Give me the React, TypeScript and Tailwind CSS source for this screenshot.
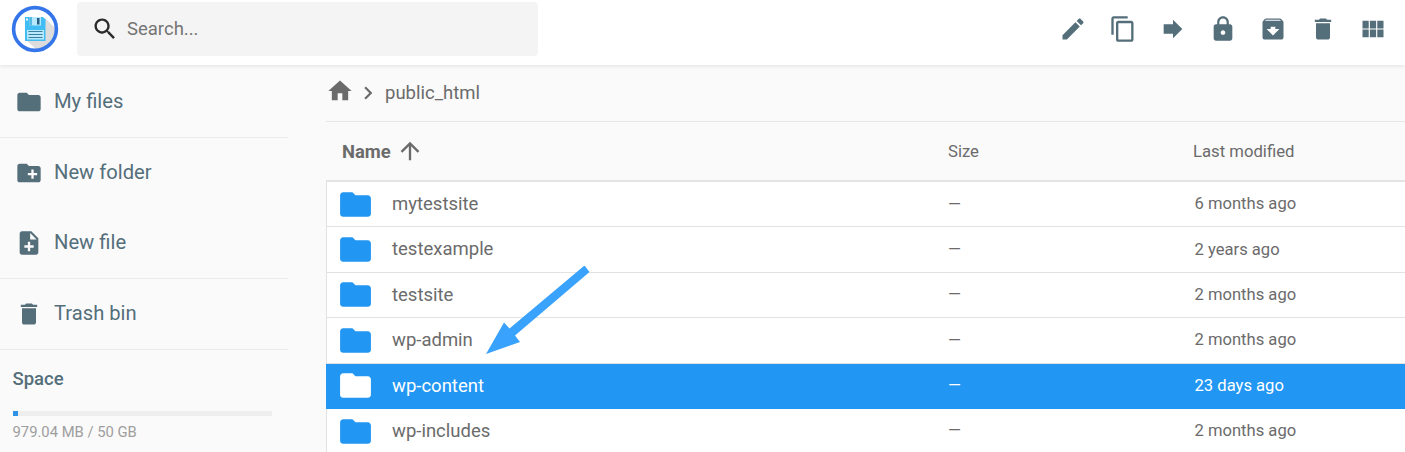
import React from 'react';
import clsx from 'clsx';

const icons = {
  folder: 'M10 4H4c-1.1 0-1.99.9-1.99 2L2 18c0 1.1.9 2 2 2h16c1.1 0 2-.9 2-2V8c0-1.1-.9-2-2-2h-8l-2-2z',
  newFolder: 'M20 6h-8l-2-2H4c-1.11 0-1.99.89-1.99 2L2 18c0 1.11.89 2 2 2h16c1.11 0 2-.89 2-2V8c0-1.11-.89-2-2-2zm-1 8h-3v3h-2v-3h-3v-2h3V9h2v3h3v2z',
  newFile: 'M14 2H6c-1.1 0-1.99.9-1.99 2L4 20c0 1.1.89 2 1.99 2H18c1.1 0 2-.9 2-2V8l-6-6zm2 14h-3v3h-2v-3H8v-2h3v-3h2v3h3v2zm-3-7V3.5L18.5 9H13z',
  trash: 'M6 19c0 1.1.9 2 2 2h8c1.1 0 2-.9 2-2V7H6v12zM19 4h-3.5l-1-1h-5l-1 1H5v2h14V4z',
  search: 'M15.5 14h-.79l-.28-.27C15.41 12.59 16 11.11 16 9.5 16 5.91 13.09 3 9.5 3S3 5.91 3 9.5 5.91 16 9.5 16c1.61 0 3.09-.59 4.23-1.57l.27.28v.79l5 4.99L20.49 19l-4.99-5zm-6 0C7.01 14 5 11.99 5 9.5S7.01 5 9.5 5 14 7.01 14 9.5 11.99 14 9.5 14z',
  edit: 'M3 17.25V21h3.75L17.81 9.94l-3.75-3.75L3 17.25zM20.71 7.04c.39-.39.39-1.02 0-1.41l-2.34-2.34c-.39-.39-1.02-.39-1.41 0l-1.83 1.83 3.75 3.75 1.83-1.83z',
  copy: 'M16 1H4c-1.1 0-2 .9-2 2v14h2V3h12V1zm3 4H8c-1.1 0-2 .9-2 2v14c0 1.1.9 2 2 2h11c1.1 0 2-.9 2-2V7c0-1.1-.9-2-2-2zm0 16H8V7h11v14z',
  forward: 'M12 8V4l8 8-8 8v-4H4V8z',
  lock: 'M18 8h-1V6c0-2.76-2.24-5-5-5S7 3.24 7 6v2H6c-1.1 0-2 .9-2 2v10c0 1.1.9 2 2 2h12c1.1 0 2-.9 2-2V10c0-1.1-.9-2-2-2zm-6 9c-1.1 0-2-.9-2-2s.9-2 2-2 2 .9 2 2-.9 2-2 2zm3.1-9H8.9V6c0-1.71 1.39-3.1 3.1-3.1 1.71 0 3.1 1.39 3.1 3.1v2z',
  archive: 'M20.54 5.23l-1.39-1.68C18.88 3.21 18.47 3 18 3H6c-.47 0-.88.21-1.16.55L3.46 5.23C3.17 5.57 3 6.02 3 6.5V19c0 1.1.9 2 2 2h14c1.1 0 2-.9 2-2V6.5c0-.48-.17-.93-.46-1.27zM12 17.5L6.5 12H10v-2h4v2h3.5L12 17.5zM5.12 5l.81-1h12l.94 1H5.12z',
  grid: 'M14.67 5v6.5H9.33V5h5.34zm1 6.5H21V5h-5.33v6.5zm-1 7.5v-6.5H9.33V19h5.34zm1-6.5V19H21v-6.5h-5.33zm-7.34 0H3V19h5.33v-6.5zm0-1V5H3v6.5h5.33z',
  home: 'M10 20v-6h4v6h5v-8h3L12 3 2 12h3v8z',
  chevron: 'M10 6L8.59 7.41 13.17 12l-4.58 4.59L10 18l6-6z',
  arrowUp: 'M4 12l1.41 1.41L11 7.83V20h2V7.83l5.58 5.59L20 12l-8-8-8 8z',
};

type IconName = keyof typeof icons;

const Icon: React.FC<{ name: IconName; className?: string }> = ({ name, className }) => (
  <svg viewBox="0 0 24 24" fill="currentColor" className={clsx('shrink-0', className ?? 'size-7')}>
    <path d={icons[name]} />
  </svg>
);

const toolbar: IconName[] = ['edit', 'copy', 'forward', 'lock', 'archive', 'trash', 'grid'];

const files = [
  { name: 'mytestsite', modified: '6 months ago' },
  { name: 'testexample', modified: '2 years ago' },
  { name: 'testsite', modified: '2 months ago' },
  { name: 'wp-admin', modified: '2 months ago' },
  { name: 'wp-content', modified: '23 days ago', selected: true },
  { name: 'wp-includes', modified: '2 months ago' },
];

const Logo = () => (
  <svg viewBox="0 0 48 48" className="size-12 shrink-0">
    <circle cx="24" cy="24" r="21.4" fill="#fff" />
    <path d="M34 13l11 11a21 21 0 0 1-19 21L14 34z" fill="#dcdcdc" />
    <circle cx="24" cy="24" r="21.4" fill="none" stroke="#3475ea" strokeWidth="3.6" />
    <path d="M14 12h18l2.500 2.500V36H14z" fill="#40bdf5" />
    <path d="M18.500 12H30v8.500H18.500z" fill="#b8e8fb" />
    <path d="M18.500 12H21v8.500h-2.500z" fill="#55b9e2" />
    <path d="M26 13h2.500v6.500H26z" fill="#245f84" />
    <path d="M15 13.500h2v2h-2z" fill="#e5f8ff" />
    <path d="M16 25h17v9.500H16z" fill="#b8e8fb" />
    <path d="M17.500 26.500h14M17.500 29.500h14M17.500 32.500h14" stroke="#397f9f" strokeWidth="1" />
  </svg>
);

const NavItem: React.FC<{ icon: IconName; label: string; divider?: boolean }> = ({ icon, label, divider }) => (
  <button
    className={clsx(
      'flex w-full items-center gap-[11px] pb-px pl-[15px] text-left text-[20.2px]',
      divider ? 'h-[71px] border-b border-[#ebebeb]' : 'h-[70px]'
    )}
  >
    <Icon name={icon} />
    <span>{label}</span>
  </button>
);

export default function App() {
  return (
    <div className="flex h-[452px] w-[1405px] flex-col overflow-hidden bg-[#fafafa] font-[Roboto,sans-serif] text-[#6b6b6b]">
      <header className="relative z-10 flex h-[65px] shrink-0 bg-white pl-[11px] text-[#546e7a] shadow-[0_1px_4px_rgba(0,0,0,0.1)]">
        <div className="mt-[5px]">
          <Logo />
        </div>
        <div className="mt-[2px] ml-[18px] flex h-[54px] w-[461px] items-center gap-2 rounded bg-[#f4f4f4] pl-[14px]">
          <Icon name="search" className="size-7 text-[#2b2b2b]" />
          <span className="mt-px text-[18.5px] text-[#757575]">Search...</span>
        </div>
        <div className="mt-[15px] mr-[18.5px] ml-auto flex h-7 gap-[22px]">
          {toolbar.map((name) => (
            <Icon key={name} name={name} />
          ))}
        </div>
      </header>

      <div className="flex min-h-0 flex-1">
        <aside className="w-[288px] shrink-0 text-[#546e7a]">
          <nav className="pt-[2px]">
            <NavItem icon="folder" label="My files" divider />
            <NavItem icon="newFolder" label="New folder" />
            <NavItem icon="newFile" label="New file" divider />
            <NavItem icon="trash" label="Trash bin" divider />
          </nav>
          <div className="pt-[17px] pl-[12.5px]">
            <div className="text-[18.5px] leading-6 font-medium">Space</div>
            <div className="mt-5 h-[5px] w-[259px] bg-[#eeeeee]">
              <div className="h-full w-[5.5px] bg-[#2e93e6]" />
            </div>
            <div className="mt-[6px] text-[14.8px] leading-5 text-[#9e9e9e]">979.04 MB / 50 GB</div>
          </div>
        </aside>

        <main className="relative ml-[38px] flex-1">
          <div className="flex h-[57px] items-center border-b border-[#e6e6e6]">
            <Icon name="home" className="mb-1 size-7" />
            <Icon name="chevron" className="ml-px size-[26px]" />
            <span className="mt-0.5 ml-1 text-[18.5px]">public_html</span>
          </div>
          <div className="flex h-[58px] items-center text-[16.7px]">
            <div className="flex w-[622px] items-center gap-[5px] pl-4 text-[18.4px] font-bold">
              <span className="mt-px">Name</span>
              <Icon name="arrowUp" />
            </div>
            <div className="mt-px w-[245px]">Size</div>
            <div className="mt-px">Last modified</div>
          </div>
          <div className="border-t-2 border-[#e4e4e4]">
            {files.map((file) => (
              <div
                key={file.name}
                className={clsx(
                  'flex h-[45.4px] items-center border-b border-l pl-[10px] text-[16.6px]',
                  file.selected
                    ? 'border-[#2196f3] bg-[#2196f3] text-white'
                    : 'border-[#e2e2e2] bg-white'
                )}
              >
                <Icon name="folder" className={clsx('size-[37px]', !file.selected && 'text-[#2196f3]')} />
                <span className="mt-[1.5px] ml-[18px] w-[556px] text-[18.5px]">{file.name}</span>
                <span className="mt-[1.5px] w-[246.5px]">—</span>
                <span className="mt-px">{file.modified}</span>
              </div>
            ))}
          </div>

          {/* pointer to the selected folder */}
          <svg viewBox="0 0 104 88" className="absolute top-[201px] left-[160px] h-[88px] w-[104px]" fill="#39a2fc">
            <path d="M0 88L18 56.5L23.500 62.5L98.500 -0.500L103.500 6L29 69.500L34 76z" />
          </svg>
        </main>
      </div>
    </div>
  );
}
